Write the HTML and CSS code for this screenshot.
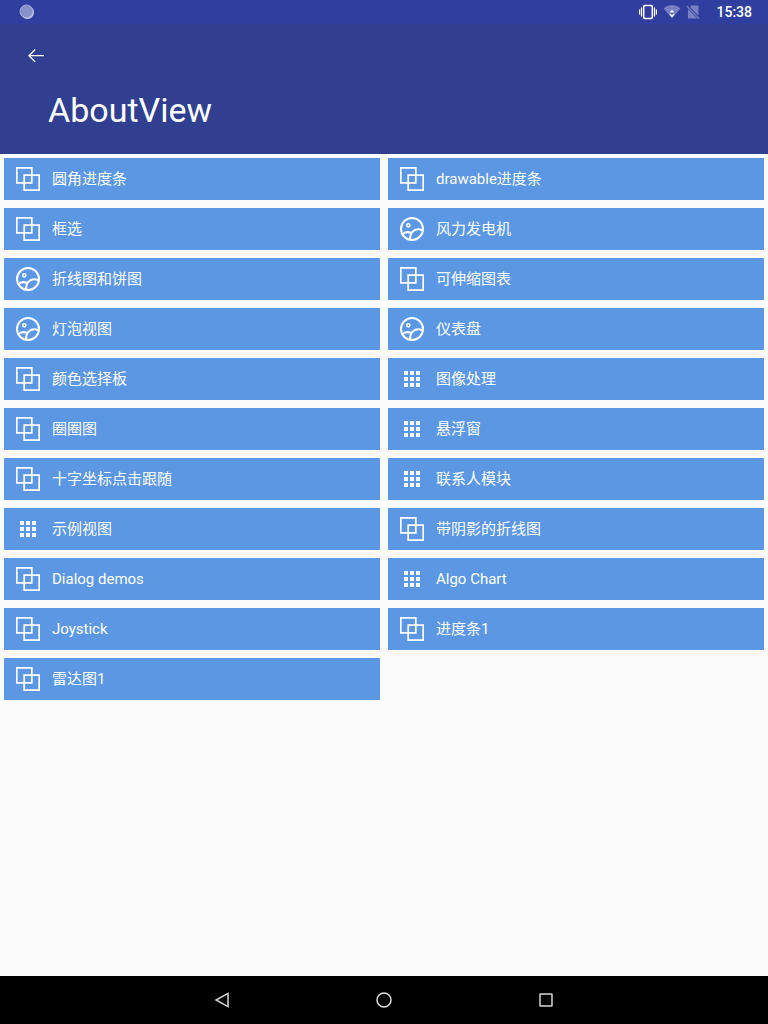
FILE: index.html
```html
<!DOCTYPE html>
<html lang="zh-CN">
<head>
<meta charset="utf-8">
<meta name="viewport" content="width=device-width, initial-scale=1">
<title>AboutView</title>
<link rel="stylesheet" href="styles.css">
</head>
<body>
<svg class="sprite" aria-hidden="true">
  <symbol id="squares" viewBox="0 0 24 24"><path d="M.8.8h15v15H.8zM8.200 8.200h15v15h-15z" fill="none" stroke="currentColor" stroke-width="1.700"/></symbol>
  <symbol id="scene" viewBox="0 0 24 24"><g fill="none" stroke="currentColor" stroke-width="2"><circle cx="12" cy="12" r="11"/><circle cx="8.300" cy="8.300" r="1.600" stroke-width="1.500"/><path d="M2 17.600C4.500 15 8 14.600 11.300 16M10.200 22.600C9.500 15.500 15 10 22.600 13.300"/></g></symbol>
  <symbol id="grid" viewBox="0 0 24 24"><path fill="currentColor" d="M4 4h4v4H4zm6 0h4v4h-4zm6 0h4v4h-4zM4 10h4v4H4zm6 0h4v4h-4zm6 0h4v4h-4zM4 16h4v4H4zm6 0h4v4h-4zm6 0h4v4h-4z"/></symbol>
</svg>

<div class="status">
  <svg class="sync" viewBox="0 0 16 16" aria-hidden="true"><circle cx="8.400" cy="8.400" r="6.500" fill="#d3d6ec"/><circle cx="7.400" cy="7.400" r="6.200" fill="#8791ca"/><circle cx="7.500" cy="7.500" r="6.500" fill="none" stroke="#a6add8" stroke-width="1"/></svg>
  <div class="indicators">
    <svg class="vibrate" viewBox="0 0 18 16" aria-hidden="true"><g fill="none" stroke="#fff"><rect x="4.700" y="1.500" width="8.600" height="13" rx="1" stroke-width="1.500"/><path d="M2.500 3.500v9M15.500 3.500v9M.6 5.500v5M17.400 5.500v5" stroke-width="1.200"/></g></svg>
    <svg class="signal" viewBox="0 0 18 16" aria-hidden="true"><path d="M.5 4.200Q9-2.200 17.500 4.200L9 14.500z" fill="#7680c2"/><path d="M5.800 9.200L9 5.800l3.200 3.400L9 13.500z" fill="#fff"/><path d="M6 9h6M9 9v2" stroke="#303f9f" stroke-width="1"/></svg>
    <svg class="sim" viewBox="0 0 16 16" aria-hidden="true"><path d="M6.500 1.500h7v10.200L5 3z" fill="#7680c2"/><path d="M3 5v9.500h9.400z" fill="#7680c2"/><path d="M1.800 2L14 14.500" stroke="#7680c2" stroke-width="1.200"/></svg>
    <time>15:38</time>
  </div>
</div>

<header class="toolbar">
  <button class="back" aria-label="返回"><svg viewBox="0 0 16 16" aria-hidden="true"><path d="M7.200 1.500L1 7.700l6.200 6.200M1 7.700h15" fill="none" stroke="#fff" stroke-width="1.300"/></svg></button>
  <h1>AboutView</h1>
</header>

<main class="list">
  <button class="item"><svg><use href="#squares"/></svg>圆角进度条</button>
  <button class="item"><svg><use href="#squares"/></svg>drawable进度条</button>
  <button class="item"><svg><use href="#squares"/></svg>框选</button>
  <button class="item"><svg><use href="#scene"/></svg>风力发电机</button>
  <button class="item"><svg><use href="#scene"/></svg>折线图和饼图</button>
  <button class="item"><svg><use href="#squares"/></svg>可伸缩图表</button>
  <button class="item"><svg><use href="#scene"/></svg>灯泡视图</button>
  <button class="item"><svg><use href="#scene"/></svg>仪表盘</button>
  <button class="item"><svg><use href="#squares"/></svg>颜色选择板</button>
  <button class="item"><svg><use href="#grid"/></svg>图像处理</button>
  <button class="item"><svg><use href="#squares"/></svg>圈圈图</button>
  <button class="item"><svg><use href="#grid"/></svg>悬浮窗</button>
  <button class="item"><svg><use href="#squares"/></svg>十字坐标点击跟随</button>
  <button class="item"><svg><use href="#grid"/></svg>联系人模块</button>
  <button class="item"><svg><use href="#grid"/></svg>示例视图</button>
  <button class="item"><svg><use href="#squares"/></svg>带阴影的折线图</button>
  <button class="item"><svg><use href="#squares"/></svg>Dialog demos</button>
  <button class="item"><svg><use href="#grid"/></svg>Algo Chart</button>
  <button class="item"><svg><use href="#squares"/></svg>Joystick</button>
  <button class="item"><svg><use href="#squares"/></svg>进度条1</button>
  <button class="item"><svg><use href="#squares"/></svg>雷达图1</button>
</main>

<nav class="navbar">
  <button aria-label="后退"><svg viewBox="0 0 18 18" aria-hidden="true"><path d="M15 2.400v13.200L3 9z"/></svg></button>
  <button aria-label="主屏幕"><svg viewBox="0 0 18 18" aria-hidden="true"><circle cx="9" cy="9" r="7"/></svg></button>
  <button aria-label="最近任务"><svg viewBox="0 0 18 18" aria-hidden="true"><rect x="3" y="3" width="12" height="12" rx=".5"/></svg></button>
</nav>
</body>
</html>
```

FILE: styles.css
```css
* { box-sizing: border-box; }

body {
  margin: 0;
  min-height: 100vh;
  display: flex;
  flex-direction: column;
  background: #fafafa;
  color: #fff;
  font-family: Roboto, "Noto Sans CJK SC", sans-serif;
}

button {
  padding: 0;
  border: 0;
  background: none;
  color: inherit;
  font: inherit;
  cursor: pointer;
}

svg { display: block; }

.sprite {
  position: absolute;
  width: 0;
  height: 0;
}

.status {
  display: flex;
  align-items: center;
  justify-content: space-between;
  height: 24px;
  padding: 0 16px 0 19px;
  background: #303f9f;
}

.sync { width: 16px; height: 16px; }

.indicators {
  display: flex;
  align-items: center;
}

.vibrate, .signal { width: 18px; height: 16px; }
.signal { margin-left: 6px; }
.sim { width: 16px; height: 16px; margin-left: 4px; }

.status time {
  margin-left: 15px;
  font-size: 14px;
  font-weight: 500;
  line-height: 24px;
}

.toolbar {
  padding: 20px 28px 24px;
  background: #303f8f;
}

.back { display: block; }
.back svg { width: 16px; height: 24px; }

.toolbar h1 {
  margin: 22px 20px 0;
  font-size: 34px;
  font-weight: 400;
  line-height: 40px;
}

.list {
  flex: 1;
  display: grid;
  grid-template-columns: 1fr 1fr;
  align-content: start;
  gap: 8px;
  padding: 4px;
}

.item {
  display: flex;
  align-items: center;
  gap: 12px;
  min-height: 42px;
  padding: 0 12px;
  background: #5c97e3;
  font-size: 15px;
  line-height: 18px;
  text-align: left;
}

.item svg { width: 24px; height: 24px; }

.navbar {
  display: flex;
  justify-content: center;
  height: 48px;
  background: #000;
}

.navbar button {
  display: flex;
  align-items: center;
  justify-content: center;
  width: 162px;
}

.navbar svg {
  width: 18px;
  height: 18px;
  fill: none;
  stroke: #d8d8d8;
  stroke-width: 1.5;
}
```
